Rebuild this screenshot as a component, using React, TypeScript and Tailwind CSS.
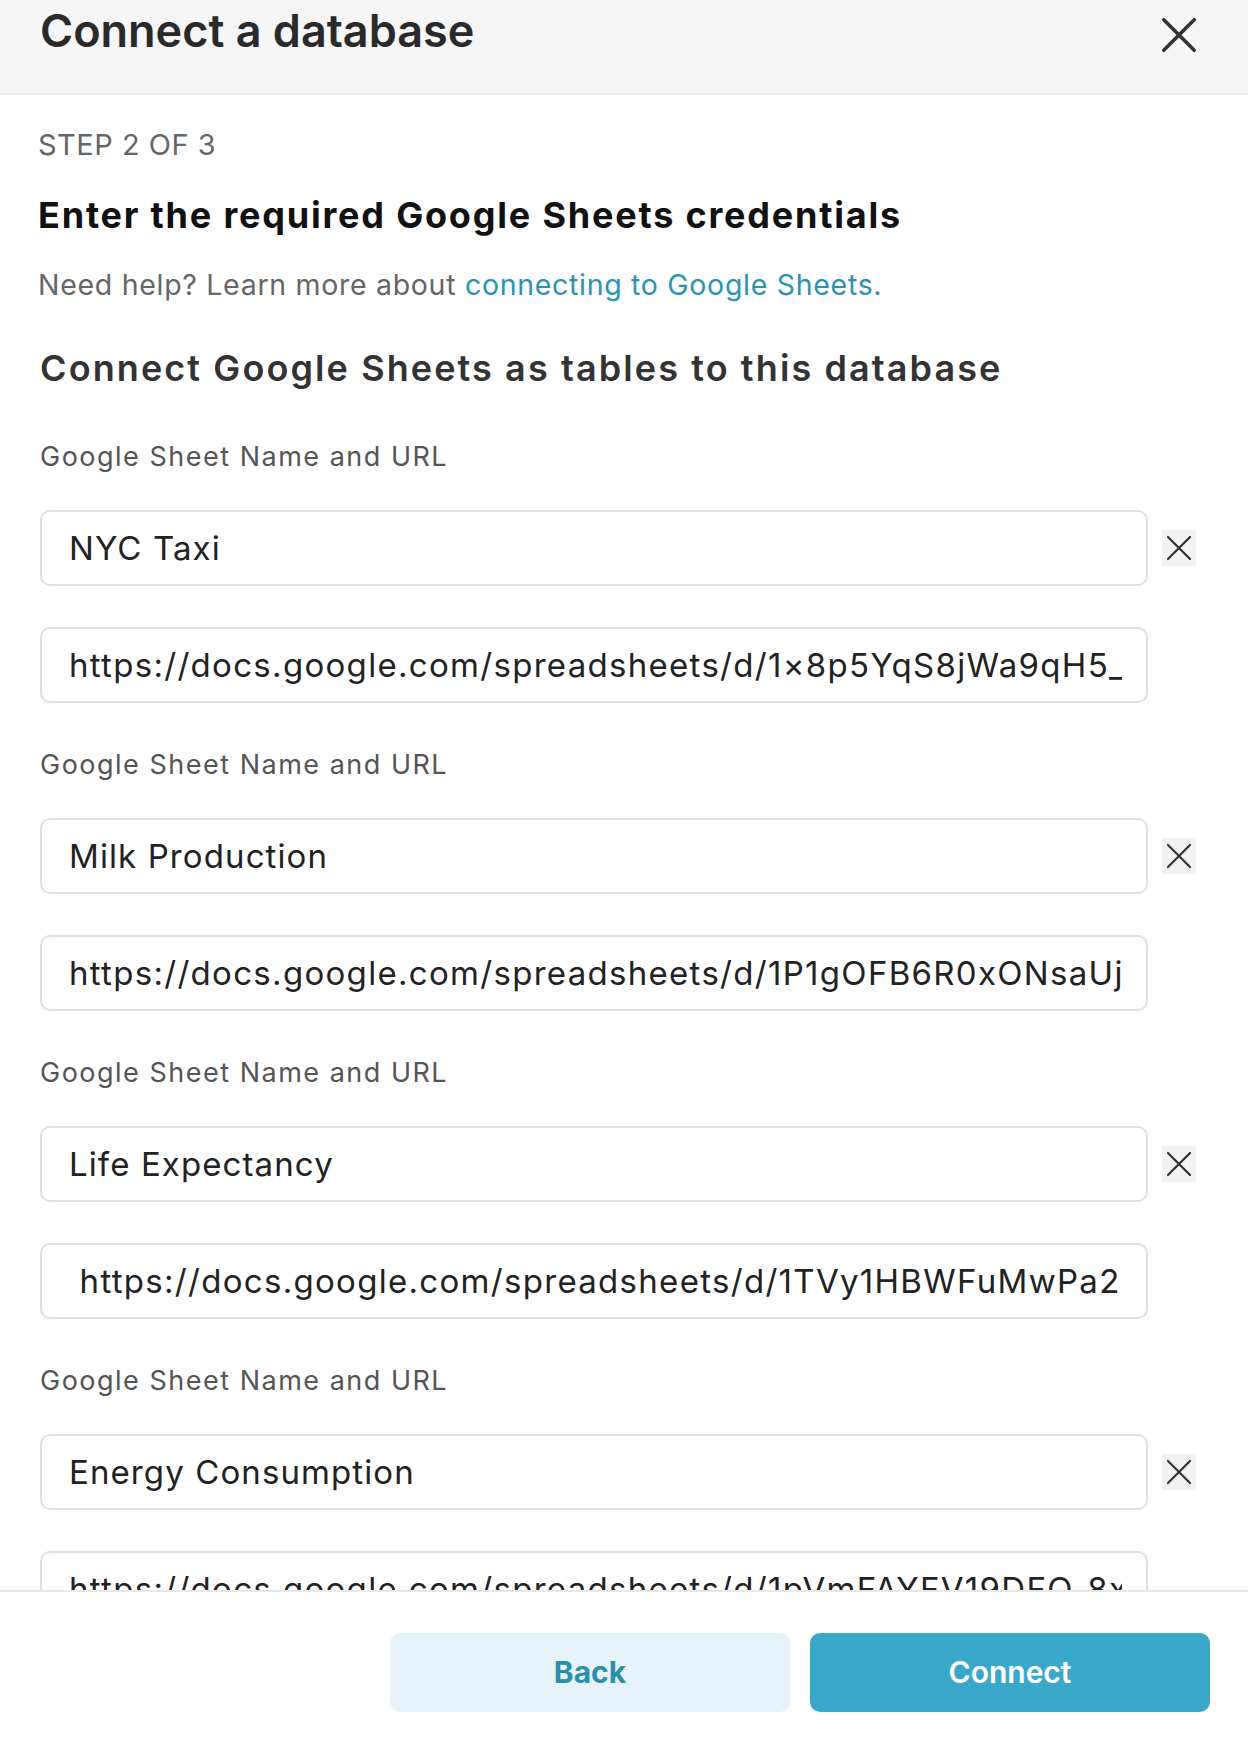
interface SheetEntry {
  name: string;
  url: string;
}

const sheets: SheetEntry[] = [
  {
    name: 'NYC Taxi',
    url: 'https://docs.google.com/spreadsheets/d/1×8p5YqS8jWa9qH5_',
  },
  {
    name: 'Milk Production',
    url: 'https://docs.google.com/spreadsheets/d/1P1gOFB6R0xONsaUj3Lq',
  },
  {
    name: 'Life Expectancy',
    url: ' https://docs.google.com/spreadsheets/d/1TVy1HBWFuMwPa2',
  },
  {
    name: 'Energy Consumption',
    url: 'https://docs.google.com/spreadsheets/d/1pVmFAYFV19DFO_8xq',
  },
];

function CloseGlyph({ size, stroke }: { size: number; stroke: number }) {
  return (
    <svg width={size} height={size} viewBox="0 0 26 26" fill="none">
      <path
        d="M2 2 24 24M24 2 2 24"
        stroke="currentColor"
        strokeWidth={stroke}
        strokeLinecap="round"
      />
    </svg>
  );
}

function SheetFields({ sheet }: { sheet: SheetEntry }) {
  return (
    <div className="flex flex-col">
      <label className="text-[27px] leading-[36px] tracking-[1.5px] text-[#555]">
        Google Sheet Name and URL
      </label>
      <div className="mt-[35px] flex items-center gap-[14px]">
        <input
          readOnly
          value={sheet.name}
          className="h-[76px] flex-1 rounded-[10px] border-2 border-[#dfe1e8] bg-white pl-[27px] pr-[24px] text-[33px] tracking-[1.1px] text-[#222] outline-none"
        />
        <button className="flex h-[36px] w-[34px] items-center justify-center bg-[#f2f2f2] text-[#333]">
          <CloseGlyph size={26} stroke={2.2} />
        </button>
      </div>
      <div className="mt-[41px] flex items-center gap-[14px]">
        <input
          readOnly
          value={sheet.url}
          className="h-[76px] flex-1 rounded-[10px] border-2 border-[#dfe1e8] bg-white pl-[27px] pr-[24px] text-[33px] tracking-[1.3px] text-[#222] outline-none"
        />
        <div className="w-[34px]" />
      </div>
    </div>
  );
}

export default function App() {
  return (
    <div className="flex h-[1748px] w-[1248px] flex-col bg-white font-['Inter',sans-serif]">
      <header className="flex h-[95px] shrink-0 items-start justify-between border-b-2 border-[#eeeeee] bg-[#f6f6f6] pl-[40px] pr-[51px]">
        <h1 className="mt-[2px] text-[45px] font-semibold leading-[58px] text-[#2a2a2a]">
          Connect a database
        </h1>
        <button className="mt-[17px] text-[#333]">
          <CloseGlyph size={36} stroke={2.6} />
        </button>
      </header>

      <main className="min-h-0 flex-1 overflow-hidden pl-[38px] pr-[52px] pt-[32px]">
        <p className="text-[29px] uppercase leading-[36px] tracking-[0.5px] text-[#666]">
          Step 2 of 3
        </p>
        <h2 className="mt-[30px] text-[36px] font-bold leading-[44px] tracking-[1.8px] text-[#111]">
          Enter the required Google Sheets credentials
        </h2>
        <p className="mt-[30px] text-[28.5px] leading-[36px] tracking-[0.7px] text-[#666]">
          Need help? Learn more about{' '}
          <a className="text-[#2a93b3]">connecting to Google Sheets.</a>
        </p>
        <h3 className="ml-[2px] mt-[43px] text-[36px] font-semibold leading-[44px] tracking-[2.1px] text-[#333]">
          Connect Google Sheets as tables to this database
        </h3>
        <div className="ml-[2px] mt-[49px] flex flex-col gap-[44px]">
          {sheets.map((sheet) => (
            <SheetFields key={sheet.name} sheet={sheet} />
          ))}
        </div>
      </main>

      <footer className="flex h-[158px] shrink-0 justify-end gap-[20px] border-t-2 border-[#e8e8e8] bg-white pr-[38px] pt-[41px]">
        <button className="h-[79px] w-[400px] rounded-[10px] bg-[#e6f4f9] text-[30px] font-bold text-[#2d8fae]">
          Back
        </button>
        <button className="h-[79px] w-[400px] rounded-[10px] bg-[#3aa8cb] text-[30px] font-semibold text-white">
          Connect
        </button>
      </footer>
    </div>
  );
}
